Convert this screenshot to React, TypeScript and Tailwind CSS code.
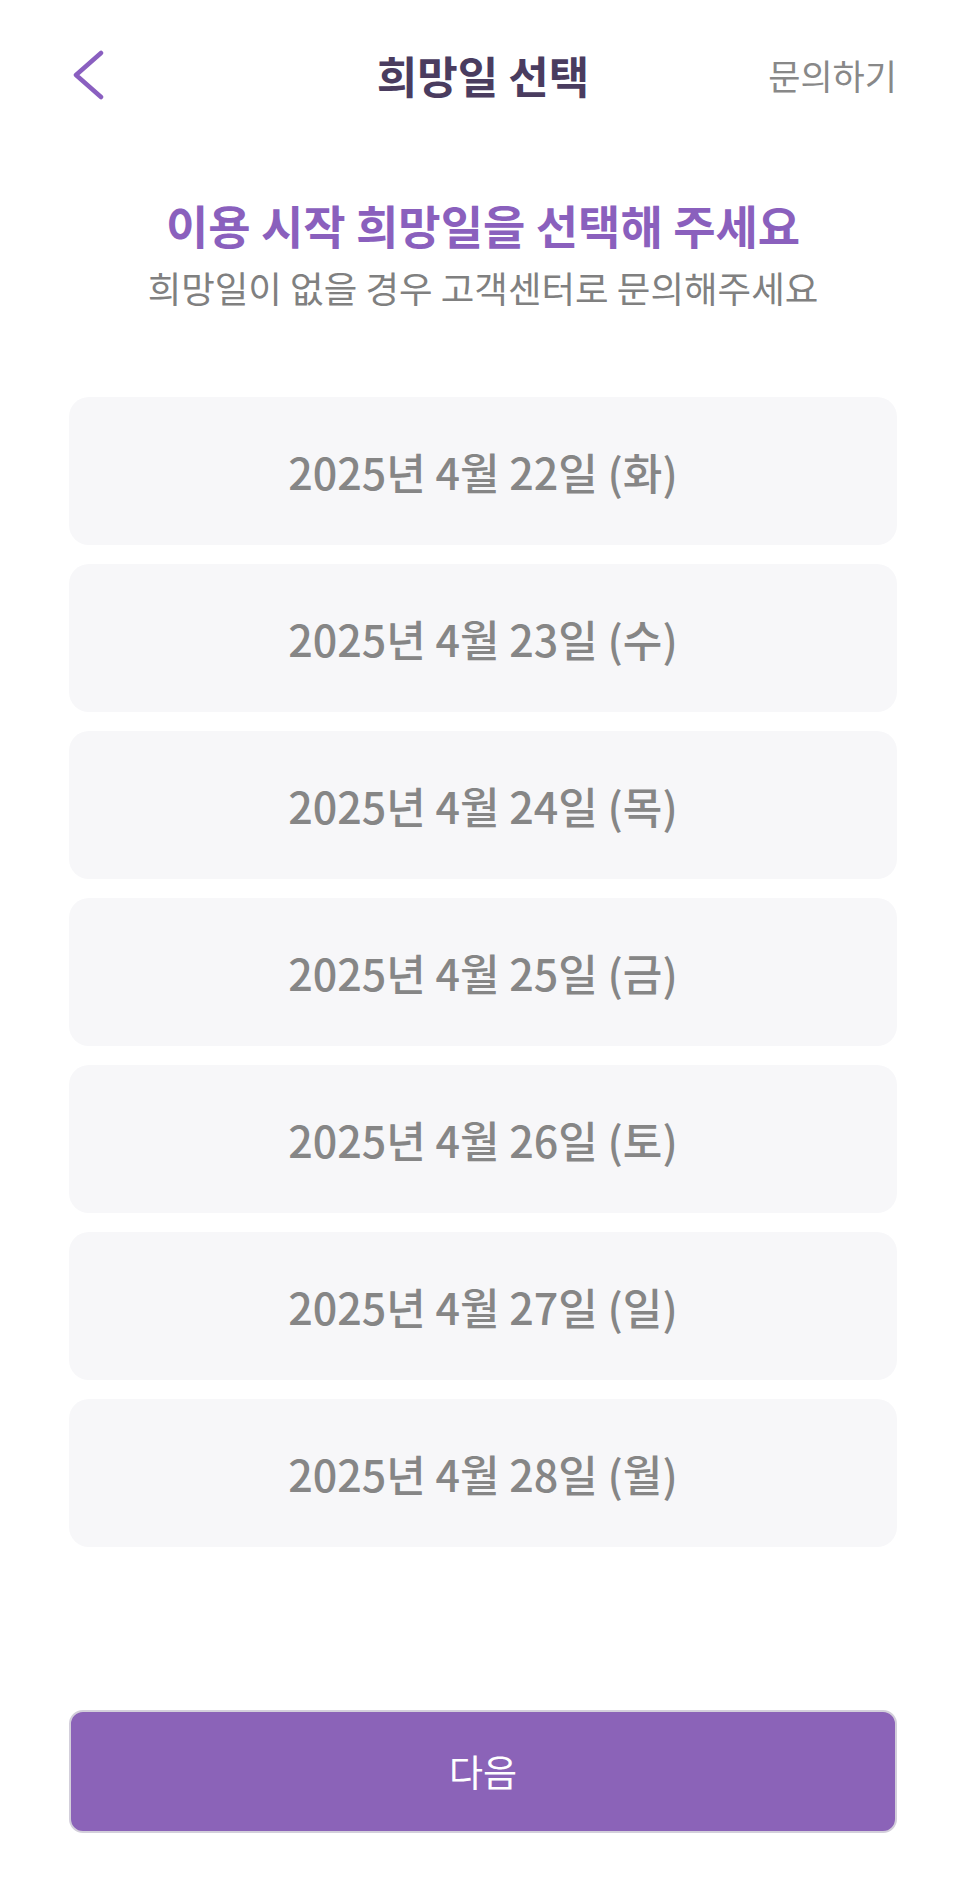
import React from 'react'

const dates = [
  '2025년 4월 22일 (화)',
  '2025년 4월 23일 (수)',
  '2025년 4월 24일 (목)',
  '2025년 4월 25일 (금)',
  '2025년 4월 26일 (토)',
  '2025년 4월 27일 (일)',
  '2025년 4월 28일 (월)',
]

function BackIcon() {
  return (
    <svg width="34" height="50" viewBox="0 0 34 50" fill="none">
      <path
        d="M30 3 L5 25 L30 47"
        stroke="#8a5fc0"
        strokeWidth="4.5"
        strokeLinecap="round"
        strokeLinejoin="round"
      />
    </svg>
  )
}

export default function App() {
  return (
    <div
      className="flex min-h-[1887px] w-full flex-col bg-white px-[69px] pb-[54px]"
      style={{ fontFamily: '"Noto Sans CJK KR", "Noto Sans", sans-serif' }}
    >
      {/* header */}
      <header className="grid h-[150px] grid-cols-[1fr_auto_1fr] items-center">
        <button className="justify-self-start pl-[2px]">
          <BackIcon />
        </button>
        <h1 className="text-[44px] font-bold text-[#4a3c5f]">희망일 선택</h1>
        <button className="justify-self-end text-[35px] text-[#888888]">문의하기</button>
      </header>

      <div className="mt-[45px] flex flex-col items-center">
        <h2 className="text-[46px] leading-[58px] font-bold text-[#8a60bd]">
          이용 시작 희망일을 선택해 주세요
        </h2>
        <p className="mt-[12px] text-[36.5px] leading-[46px] text-[#808080]">
          희망일이 없을 경우 고객센터로 문의해주세요
        </p>
      </div>

      <div className="mt-[86px] flex flex-col gap-[19px]">
        {dates.map((d) => (
          <button
            key={d}
            className="flex h-[148px] items-center justify-center rounded-[20px] bg-[#f7f7f9] text-[43px] font-medium text-[#868686]"
          >
            {d}
          </button>
        ))}
      </div>

      <button className="mt-auto flex h-[123px] items-center justify-center rounded-[14px] border-2 border-[#d3cfdb] bg-[#8b63b8] text-[37px] text-white">
        다음
      </button>
    </div>
  )
}
